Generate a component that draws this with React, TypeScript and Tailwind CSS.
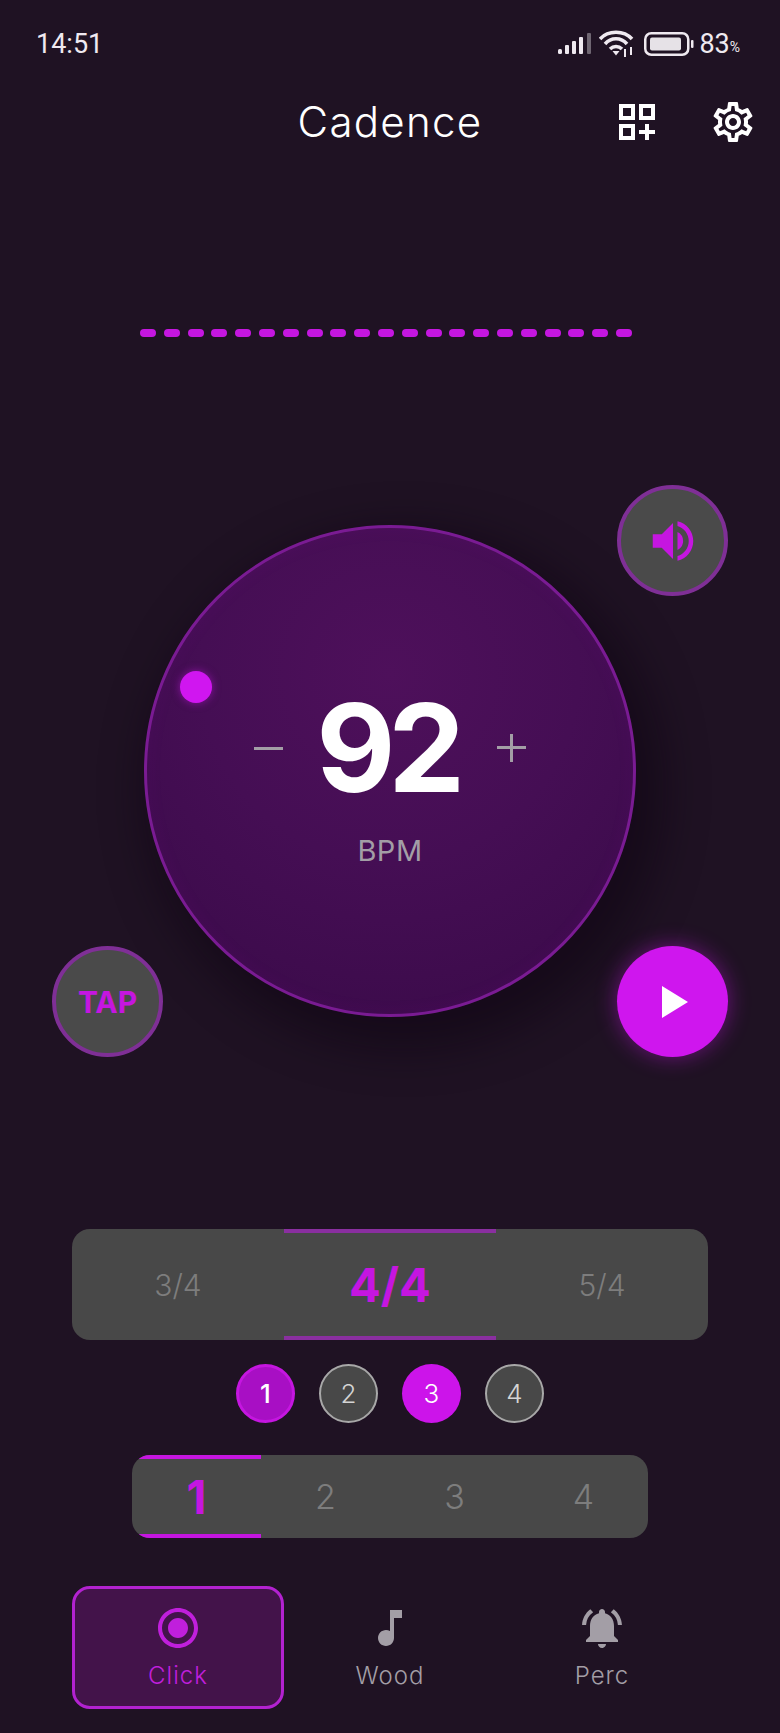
import React from 'react';
import {
  MdMusicNote,
  MdNotificationsActive,
  MdOutlineDashboardCustomize,
  MdOutlineSettings,
  MdRadioButtonChecked,
  MdVolumeUp,
} from 'react-icons/md';

const METERS = ['3/4', '4/4', '5/4'];
const BEATS = ['1', '2', '3', '4'];

const StatusIcons: React.FC = () => (
  <div className="flex items-center">
    {/* signal */}
    <svg width="36" height="24" viewBox="0 0 36 24" className="mr-[5px]">
      <rect x="0" y="17" width="4" height="5" rx="1.5" fill="#efe9f0" />
      <rect x="7" y="13" width="4" height="9" rx="1" fill="#efe9f0" />
      <rect x="14" y="9" width="4" height="13" rx="1" fill="#efe9f0" />
      <rect x="21" y="5" width="4" height="17" rx="1" fill="#efe9f0" />
      <rect x="29" y="1" width="4" height="21" rx="1" fill="#6f6672" />
    </svg>
    {/* wifi */}
    <svg width="36" height="28" viewBox="0 0 36 28" className="mr-[9px]" fill="none" stroke="#efe9f0" strokeWidth="3.5">
      <path d="M1 9C9 0 25 0 33 9" />
      <path d="M6 14C12 7 22 7 28 14" />
      <path d="M11 19C14.5 15.5 19.5 15.5 23 19" />
      <path d="M13.5 21L17 25.5L20.5 21Z" fill="#efe9f0" stroke="none" />
      <path d="M26 19v8M32 17v8" strokeWidth="2" />
    </svg>
    {/* battery */}
    <svg width="50" height="24" viewBox="0 0 50 24" className="mr-[5px]">
      <rect x="1.25" y="1.25" width="43" height="21.5" rx="6" fill="none" stroke="#efe9f0" strokeWidth="2.5" />
      <rect x="6" y="5.5" width="31" height="13" rx="2" fill="#e6e2e7" />
      <rect x="47" y="8" width="2.5" height="8" rx="1" fill="#efe9f0" />
    </svg>
    <span className="text-[27px] leading-none text-[#efe9f0]">83</span>
    <span className="mt-[6px] text-[14px] leading-none text-[#efe9f0]">%</span>
  </div>
);

const RoundButton: React.FC<{ className: string; children: React.ReactNode }> = ({ className, children }) => (
  <button className={`absolute flex h-[111px] w-[111px] items-center justify-center rounded-full ${className}`}>
    {children}
  </button>
);

const SoundTab: React.FC<{ label: string; active?: boolean; children: React.ReactNode }> = ({
  label,
  active,
  children,
}) => (
  <button
    className={`flex h-[123px] flex-col items-center rounded-[18px] border-[3px] pt-[15px] ${
      active ? 'border-[#b322d0] bg-[#43134a] text-[#c01fdc]' : 'border-transparent text-[#a39ea6]'
    }`}
  >
    {children}
    <span className="mt-[9px] text-[24px] font-light leading-[30px] tracking-[1px]">{label}</span>
  </button>
);

export default function App() {
  return (
    <div className="h-[1733px] w-[780px] overflow-hidden bg-[#1f1223] font-['Inter',sans-serif]">
      {/* Status bar */}
      <div className="flex h-[88px] items-center justify-between pl-[36px] pr-[40px] font-['Roboto',sans-serif]">
        <span className="text-[27px] leading-none text-[#efe9f0]">14:51</span>
        <StatusIcons />
      </div>

      {/* Header */}
      <div className="grid h-[68px] grid-cols-[1fr_auto_1fr] items-center px-[23px]">
        <div />
        <h1 className="text-[42px] font-light leading-none tracking-[1.3px] text-white">Cadence</h1>
        <div className="flex justify-end gap-[48px] text-white">
          <MdOutlineDashboardCustomize size={48} />
          <MdOutlineSettings size={48} />
        </div>
      </div>

      {/* Beat dashes */}
      <div className="ml-[140px] mt-[173px] flex w-[492px] justify-between">
        {Array.from({ length: 21 }).map((_, i) => (
          <div key={i} className="h-[8px] w-[16px] rounded-full bg-[#c516e0]" />
        ))}
      </div>

      {/* Dial */}
      <div className="relative mt-[147px] h-[573px] pt-[41px]">
        <div className="relative mx-auto h-[492px] w-[492px] rounded-full border-[3px] border-[#7a1b93] bg-[radial-gradient(circle_at_50%_30%,#4e105b_0%,#450e54_45%,#390a48_100%)] pt-[160px] shadow-[14px_18px_40px_14px_rgba(14,3,18,0.5),inset_0_0_18px_rgba(190,30,220,0.06)]">
          <div className="absolute left-[33px] top-[143px] h-[32px] w-[32px] rounded-full bg-[#d016f0] shadow-[0_0_8px_rgba(208,22,240,0.5)]" />
          <div className="flex h-[120px] items-center justify-center gap-[36px]">
            <span className="h-[3px] w-[29px] bg-[#a39ea6]" />
            <span className="-ml-[3px] mr-[3px] text-[122px] font-bold leading-none tracking-[-0.06em] text-white">92</span>
            <span className="relative h-[28px] w-[29px]">
              <span className="absolute left-0 top-[12px] h-[3px] w-[29px] bg-[#a39ea6]" />
              <span className="absolute left-[13px] top-0 h-[28px] w-[3px] bg-[#a39ea6]" />
            </span>
          </div>
          <div className="mt-[26px] text-center text-[29px] leading-[34px] tracking-[0.5px] text-[#a39ea6]">BPM</div>
        </div>

        <RoundButton className="right-[52px] top-[1px] border-[4px] border-[#7f2f96] bg-[#4a4a4a] text-[#c516e0]">
          <MdVolumeUp size={54} />
        </RoundButton>
        <RoundButton className="bottom-0 left-[52px] border-[4px] border-[#7f2f96] bg-[#4a4a4a]">
          <span className="text-[30px] font-bold leading-none text-[#c516e0]">TAP</span>
        </RoundButton>
        <RoundButton className="bottom-0 right-[52px] bg-[#cf16ee] shadow-[0_0_22px_rgba(207,22,238,0.45)]">
          <svg width="28" height="32" viewBox="0 0 28 32" className="ml-[4px]">
            <path d="M1 0L27 16L1 32Z" fill="#ffffff" />
          </svg>
        </RoundButton>
      </div>

      {/* Meter */}
      <div className="mx-auto mt-[172px] grid h-[111px] w-[636px] grid-cols-3 overflow-hidden rounded-[18px] bg-[#484848]">
        {METERS.map((m) =>
          m === '4/4' ? (
            <div
              key={m}
              className="flex items-center justify-center border-y-[4px] border-[#8a2fa0] text-[47px] font-bold leading-none text-[#c516e0]"
            >
              {m}
            </div>
          ) : (
            <div key={m} className="flex items-center justify-center text-[30px] font-light leading-none text-[#7d7d7d]">
              {m}
            </div>
          ),
        )}
      </div>

      {/* Beat circles */}
      <div className="mt-[24px] flex justify-center gap-[24px]">
        <div className="flex h-[59px] w-[59px] items-center justify-center rounded-full border-[3px] border-[#c516e0] bg-[#a80fc4] text-[26px] font-medium text-white">
          1
        </div>
        <div className="flex h-[59px] w-[59px] items-center justify-center rounded-full border-[2px] border-[#a8a8a8] bg-[#484848] text-[26px] font-light text-[#d4d4d4]">
          2
        </div>
        <div className="flex h-[59px] w-[59px] items-center justify-center rounded-full bg-[#cc14ea] text-[26px] font-light text-white">
          3
        </div>
        <div className="flex h-[59px] w-[59px] items-center justify-center rounded-full border-[2px] border-[#a8a8a8] bg-[#484848] text-[26px] font-light text-[#d4d4d4]">
          4
        </div>
      </div>

      {/* Subdivision */}
      <div className="mx-auto mt-[32px] grid h-[83px] w-[516px] grid-cols-4 overflow-hidden rounded-[18px] bg-[#484848]">
        {BEATS.map((b) =>
          b === '1' ? (
            <div
              key={b}
              className="flex items-center justify-center border-y-[4px] border-[#c516e0] text-[46px] font-bold leading-none text-[#c516e0]"
            >
              {b}
            </div>
          ) : (
            <div key={b} className="flex items-center justify-center text-[34px] font-light leading-none text-[#7d7d7d]">
              {b}
            </div>
          ),
        )}
      </div>

      {/* Sound tabs */}
      <div className="mx-auto mt-[48px] grid w-[636px] grid-cols-3">
        <SoundTab label="Click" active>
          <MdRadioButtonChecked size={48} />
        </SoundTab>
        <SoundTab label="Wood">
          <MdMusicNote size={48} />
        </SoundTab>
        <SoundTab label="Perc">
          <MdNotificationsActive size={48} />
        </SoundTab>
      </div>
    </div>
  );
}
